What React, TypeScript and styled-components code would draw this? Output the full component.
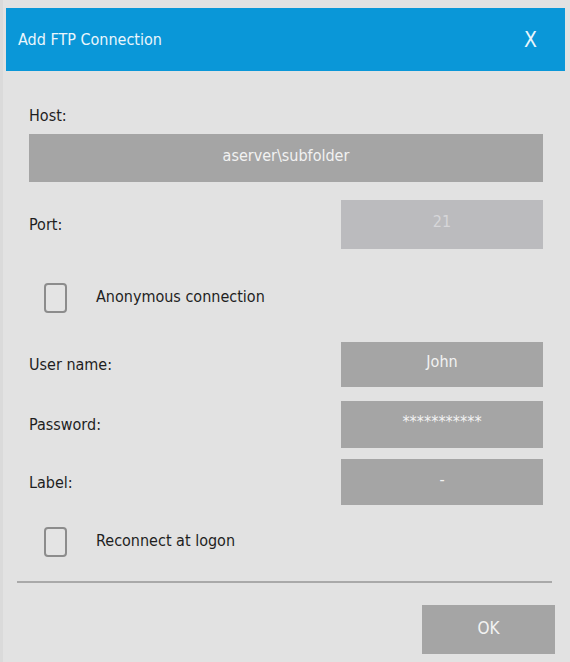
import styled, { createGlobalStyle } from "styled-components";

const GlobalStyle = createGlobalStyle`
  body {
    margin: 0;
    background: #dcdcdc;
    font-family: "DejaVu Sans Condensed", "DejaVu Sans", "Liberation Sans", sans-serif;
    font-stretch: condensed;
  }
`;

const Dialog = styled.div`
  width: 570px;
  height: 662px;
  box-sizing: border-box;
  padding-top: 8px;
  background: #e2e2e2;
  border-left: 3px solid #dadada;
  display: flex;
  flex-direction: column;
`;

const Header = styled.div`
  margin-left: 3px;
  width: 559px;
  height: 63px;
  box-sizing: border-box;
  background: #0a97d8;
  color: #eaf6fc;
  display: flex;
  align-items: center;
  justify-content: space-between;
  padding: 0 28px 0 12px;
  font-size: 16px;
`;

const Close = styled.span`
  font-size: 21px;
  font-weight: 300;
`;

const Body = styled.div`
  display: flex;
  flex-direction: column;
  padding: 0 27px 0 26px;
`;

const Caption = styled.div<{ $top: number }>`
  margin-top: ${(p) => p.$top}px;
  height: 24px;
  line-height: 24px;
  font-size: 16px;
  color: #1e1e1e;
`;

const Field = styled.div<{ $wide?: boolean; $disabled?: boolean; $h: number }>`
  width: ${(p) => (p.$wide ? "514px" : "202px")};
  height: ${(p) => p.$h}px;
  background: ${(p) => (p.$disabled ? "#bbbbbe" : "#a5a5a5")};
  color: ${(p) => (p.$disabled ? "#d6d6d9" : "#f2f2f2")};
  display: flex;
  align-items: center;
  justify-content: center;
  font-size: 16px;
  padding-bottom: 6px;
  box-sizing: border-box;
`;

const Row = styled.div<{ $top: number }>`
  margin-top: ${(p) => p.$top}px;
  display: flex;
  align-items: center;
  justify-content: space-between;
`;

const RowLabel = styled.span`
  font-size: 16px;
  color: #1e1e1e;
`;

const Check = styled.label<{ $top: number }>`
  margin-top: ${(p) => p.$top}px;
  margin-left: 15px;
  display: flex;
  align-items: center;
  gap: 29px;
  font-size: 16px;
  color: #1e1e1e;
`;

const CheckText = styled.span`
  margin-top: -4px;
`;

const Box = styled.span`
  width: 23px;
  height: 30px;
  box-sizing: border-box;
  border: 2px solid #8c8c8c;
  border-radius: 4px;
  background: #e4e4e4;
`;

const Separator = styled.div`
  margin: 24px 18px 0 14px;
  height: 2px;
  background: #a9a9a9;
`;

const Footer = styled.div`
  display: flex;
  justify-content: flex-end;
  padding: 22px 15px 0 0;
`;

const OkButton = styled.button`
  width: 133px;
  height: 49px;
  border: none;
  background: #a5a5a5;
  color: #f2f2f2;
  font-family: inherit;
  font-stretch: condensed;
  font-size: 17px;
  padding-bottom: 4px;
`;

export default function App() {
  return (
    <>
      <GlobalStyle />
      <Dialog>
        <Header>
          <span>Add FTP Connection</span>
          <Close>X</Close>
        </Header>
        <Body>
          <Caption $top={33}>Host:</Caption>
          <Field $wide $h={48} style={{ marginTop: 6 }}>
            aserver\subfolder
          </Field>
          <Row $top={18}>
            <RowLabel>Port:</RowLabel>
            <Field $disabled $h={49}>21</Field>
          </Row>
          <Check $top={34}>
            <Box />
            <CheckText>Anonymous connection</CheckText>
          </Check>
          <Row $top={29}>
            <RowLabel>User name:</RowLabel>
            <Field $h={45}>John</Field>
          </Row>
          <Row $top={14}>
            <RowLabel>Password:</RowLabel>
            <Field $h={47}>***********</Field>
          </Row>
          <Row $top={11}>
            <RowLabel>Label:</RowLabel>
            <Field $h={46}>-</Field>
          </Row>
          <Check $top={22}>
            <Box />
            <CheckText>Reconnect at logon</CheckText>
          </Check>
        </Body>
        <Separator />
        <Footer>
          <OkButton>OK</OkButton>
        </Footer>
      </Dialog>
    </>
  );
}
